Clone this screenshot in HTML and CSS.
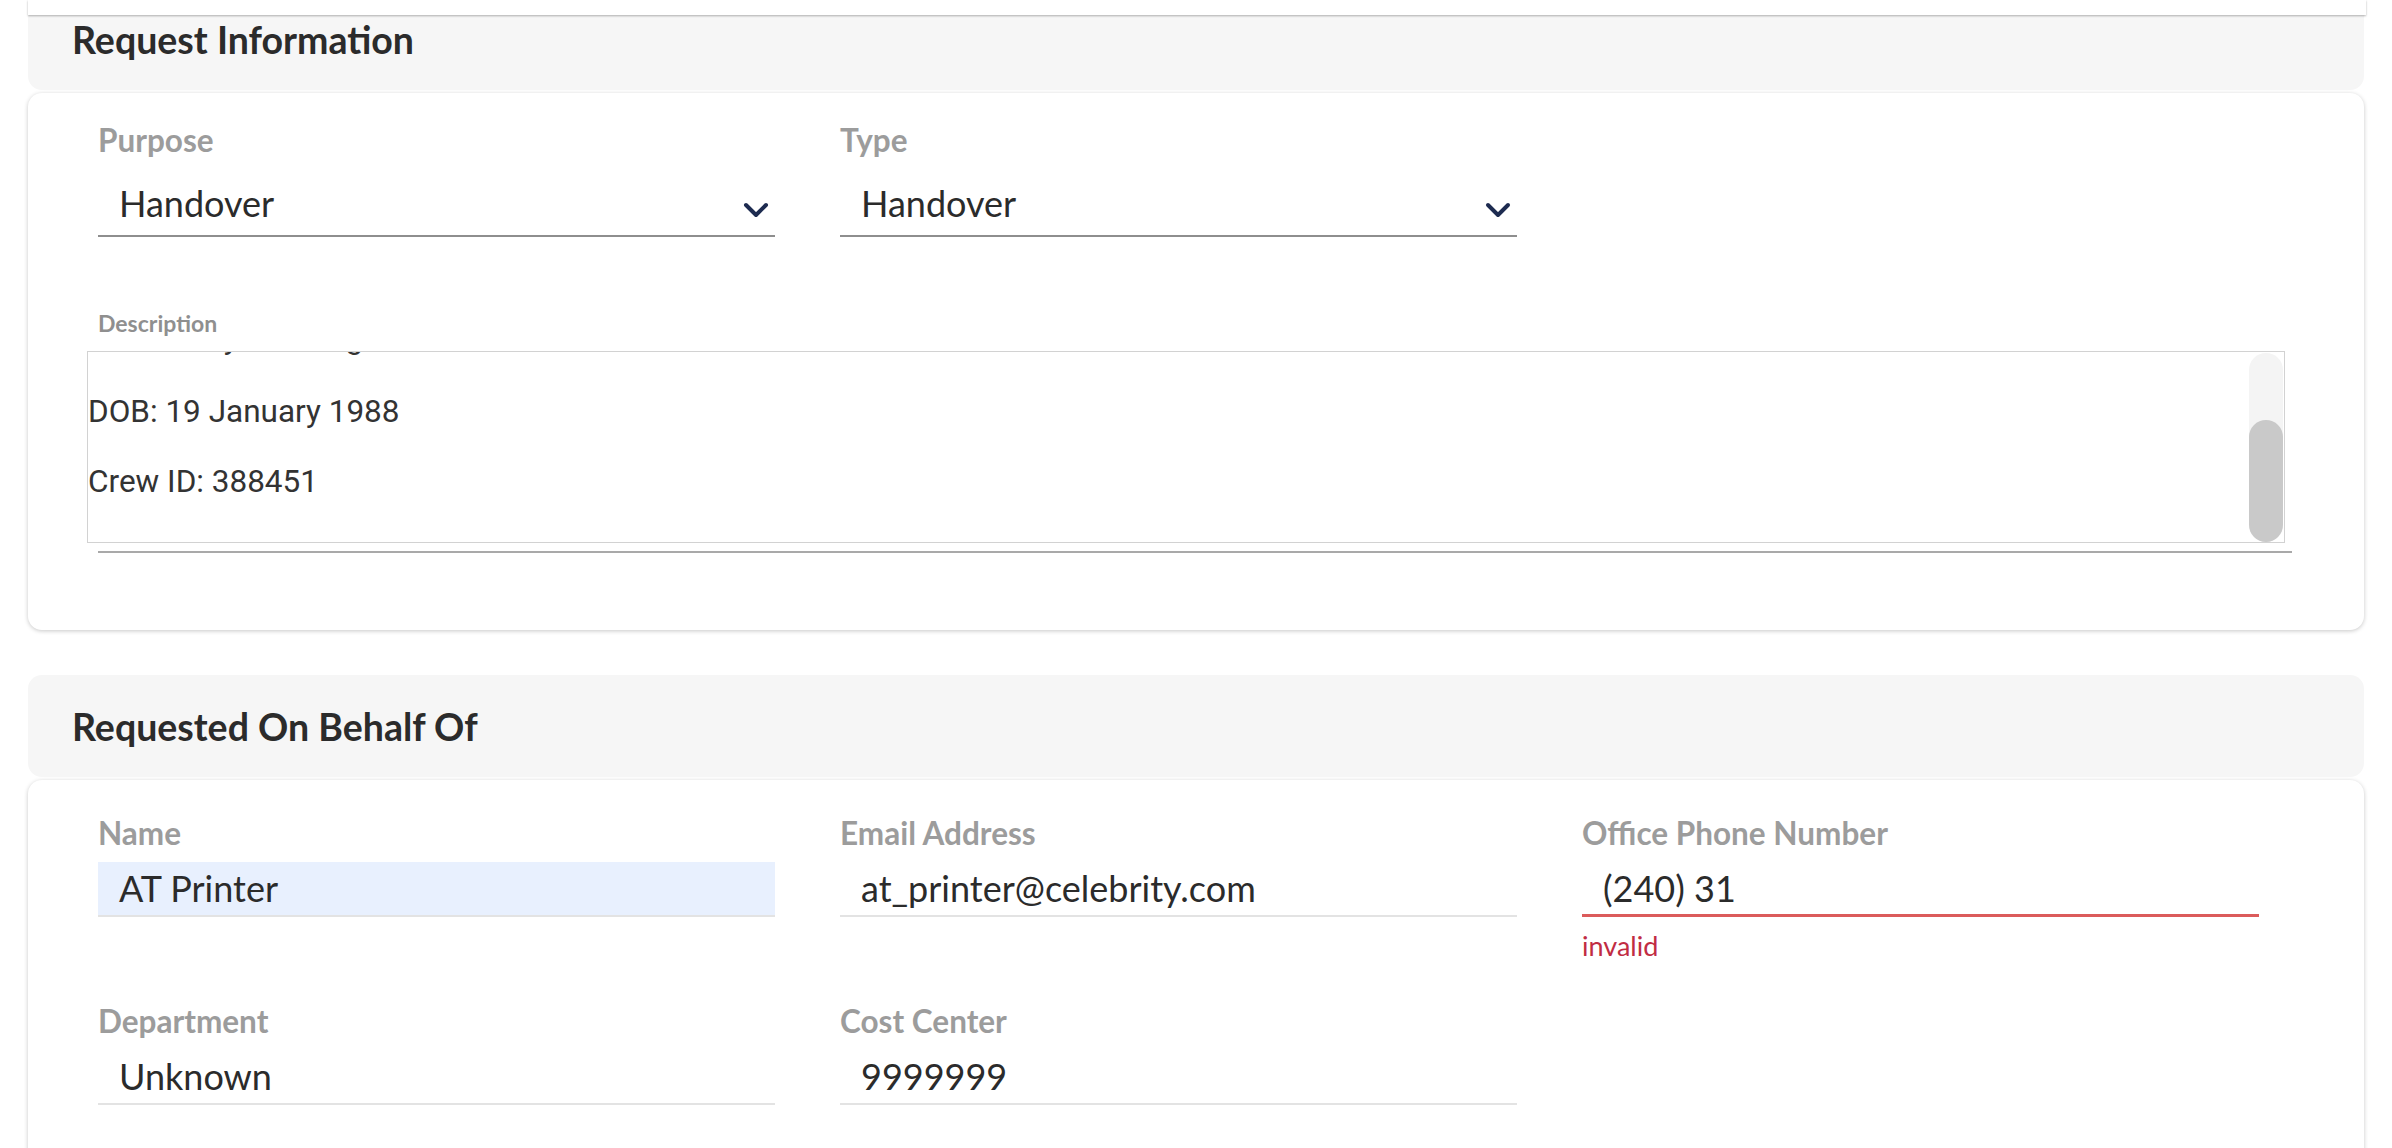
FILE: index.html
```html
<!DOCTYPE html>
<html lang="en">

<head>
  <meta charset="UTF-8" />
  <meta name="viewport" content="width=device-width, initial-scale=1.0" />
  <title>Request Form</title>
  <link rel="stylesheet" href="styles.css">
</head>

<body>
  <div class="topbar"></div>

  <div class="page">
    <section class="panel">
      <div class="panel-head">
        <h2>Request Information</h2>
      </div>
      <div class="panel-body first">
        <div class="grid">
          <div class="field">
            <label class="field-label">Purpose</label>
            <div class="select">
              <span>Handover</span>
              <svg class="chevron" width="26" height="16" viewBox="0 0 26 16">
                <path d="M3 3 L13 13 L23 3" />
              </svg>
            </div>
          </div>
          <div class="field">
            <label class="field-label">Type</label>
            <div class="select">
              <span>Handover</span>
              <svg class="chevron" width="26" height="16" viewBox="0 0 26 16">
                <path d="M3 3 L13 13 L23 3" />
              </svg>
            </div>
          </div>
        </div>

        <div class="desc">
          <label class="desc-label">Description</label>
          <div class="desc-box">
            <div class="desc-text">
              <div class="cut-line"><p>Nationality: Norwegian</p></div>
              <p>DOB: 19 January 1988</p>
              <p>Crew ID: 388451</p>
            </div>
            <div class="scrollbar">
              <div class="thumb"></div>
            </div>
          </div>
          <div class="desc-line"></div>
        </div>
      </div>
    </section>

    <section class="panel">
      <div class="panel-head">
        <h2>Requested On Behalf Of</h2>
      </div>
      <div class="panel-body second">
        <div class="grid">
          <div class="field">
            <label class="field-label">Name</label>
            <div class="input autofill">AT Printer</div>
          </div>
          <div class="field">
            <label class="field-label">Email Address</label>
            <div class="input">at_printer@celebrity.com</div>
          </div>
          <div class="field">
            <label class="field-label">Office Phone Number</label>
            <div class="input error">(240) 31</div>
            <div class="error-text">invalid</div>
          </div>
          <div class="field">
            <label class="field-label">Department</label>
            <div class="input">Unknown</div>
          </div>
          <div class="field">
            <label class="field-label">Cost Center</label>
            <div class="input">9999999</div>
          </div>
        </div>
      </div>
    </section>
  </div>
</body>

</html>
```

FILE: styles.css
```css
body {
  font-family: Lato, "Open Sans", sans-serif;
  margin: 0;
  padding: 0;
  background-color: #fff;
  color: #2b2b2b;
}

.topbar {
  position: fixed;
  top: 0;
  left: 28px;
  right: 26px;
  height: 15px;
  background: #fff;
  box-shadow: 0 1px 2px rgba(0, 0, 0, 0.3);
  z-index: 10;
}

.page {
  margin-top: -12px;
  padding: 0 28px;
}

.panel + .panel {
  margin-top: 45px;
}

.panel-head {
  height: 102px;
  display: flex;
  align-items: center;
  padding-left: 44px;
  background: #f6f6f6;
  border-radius: 14px;
}

.panel-head h2 {
  margin: 0;
  font-size: 37.5px;
  font-weight: 700;
  color: #2b2b2b;
}

.panel-body {
  margin-top: 3px;
  background: #fff;
  border-radius: 14px;
  box-shadow: 0 1px 4px rgba(0, 0, 0, 0.22);
}

.panel-body.first {
  padding: 29px 72px 77px 70px;
}

.panel-body.second {
  padding: 35px 72px 60px 70px;
}

.grid {
  display: grid;
  grid-template-columns: repeat(3, 677px);
  column-gap: 65px;
  row-gap: 42px;
}

.field-label {
  display: block;
  font-size: 31.5px;
  line-height: 36px;
  font-weight: 700;
  color: #9c9c9c;
}

.select {
  display: flex;
  justify-content: space-between;
  align-items: center;
  padding: 23px 6px 10px 21px;
  font-size: 36px;
  line-height: 44px;
  border-bottom: 2px solid #8e8e8e;
}

.chevron {
  margin-top: 14px;
}

.chevron path {
  fill: none;
  stroke: #1d2b50;
  stroke-width: 4;
  stroke-linecap: round;
  stroke-linejoin: round;
}

.desc {
  margin-top: 73px;
}

.desc-label {
  display: block;
  font-size: 23px;
  line-height: 26px;
  font-weight: 700;
  color: #8f8f8f;
}

.desc-box {
  display: flex;
  margin-top: 15px;
  margin-left: -11px;
  width: 2198px;
  height: 192px;
  box-sizing: border-box;
  border: 1px solid #d2d2d2;
  overflow: hidden;
}

.desc-text {
  flex: 1;
  font-family: Roboto, "Noto Sans", sans-serif;
  font-size: 31.5px;
  color: #333;
}

.desc-text p {
  margin: 0 0 30px;
  line-height: 40px;
}

/* previous line, scrolled almost out of view */
.cut-line {
  height: 4px;
  margin-bottom: 36px;
  overflow: hidden;
}

.cut-line p {
  margin: -33px 0 0;
}

.scrollbar {
  width: 34px;
  margin: 1px 1px 0 0;
  display: flex;
  flex-direction: column;
  background: #f4f4f4;
  border-radius: 17px;
}

.thumb {
  flex: 1;
  margin-top: 67px;
  background: #c9c9c9;
  border-radius: 17px;
}

.desc-line {
  margin-top: 8px;
  height: 2px;
  background: #a9a9a9;
}

.input {
  margin-top: 11px;
  padding: 4px 0 5px 21px;
  font-size: 36px;
  line-height: 44px;
  border-bottom: 2px solid #e3e3e3;
}

.input.autofill {
  background: #e8f0fe;
}

.input.error {
  padding-bottom: 4px;
  border-bottom: 3px solid #db5b5b;
}

.error-text {
  margin-top: 14px;
  font-size: 27px;
  line-height: 30px;
  color: #c12c43;
}
```
